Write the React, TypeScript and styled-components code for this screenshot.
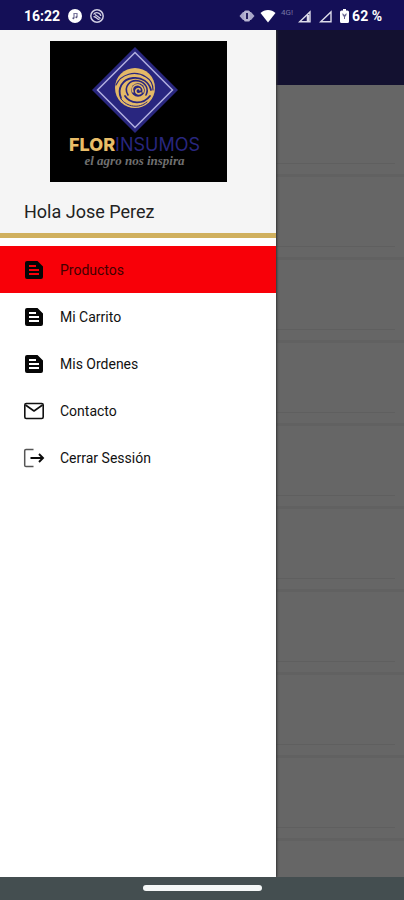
import React from "react";
import styled, { createGlobalStyle } from "styled-components";

const GlobalStyle = createGlobalStyle`
  * { box-sizing: border-box; }
  body { margin: 0; font-family: Roboto, "Liberation Sans", sans-serif; }
`;

const Screen = styled.div`
  display: flex;
  flex-direction: column;
  min-height: 100vh;
  background: #666;
`;

const StatusBar = styled.header`
  display: flex;
  align-items: center;
  justify-content: space-between;
  height: 30px;
  padding: 2px 22px 0 24px;
  background: #140f57;
  color: #fff;
  font-size: 14px;
  font-weight: 700;
`;

const StatusGroup = styled.div<{ $gap: number }>`
  display: flex;
  align-items: center;
  gap: ${(p) => p.$gap}px;
`;

const NetworkLabel = styled.span`
  align-self: flex-start;
  color: #7775a4;
  font-size: 8px;
  font-weight: 400;
  line-height: 10px;
`;

const Signals = styled.span`
  display: flex;
  gap: 8px;
`;

const Battery = styled.span`
  display: flex;
  align-items: center;
  gap: 3px;
  margin-left: 3px;
`;

const Body = styled.div`
  position: relative;
  display: flex;
  flex: 1;
  flex-direction: column;
`;

const AppBar = styled.div`
  height: 55px;
  background: #131130;
`;

const CardList = styled.div`
  display: flex;
  flex: 1;
  flex-direction: column;
  padding-top: 9px;
`;

const Card = styled.div`
  height: 83px;
  padding: 69px 9px 0;
  border-bottom: 3px solid #616161;
`;

const CardRule = styled.div`
  height: 1px;
  background: #5f5f5f;
`;

const Drawer = styled.aside`
  position: absolute;
  top: 0;
  bottom: 0;
  left: 0;
  width: 276px;
  background: #fff;
  box-shadow: 1px 0 2px #333;
  clip-path: inset(0 -4px 0 0);
`;

const Profile = styled.div`
  display: flex;
  flex-direction: column;
  padding-top: 11px;
  background: #f5f5f5;
  border-bottom: 5px solid #d0b05e;
`;

const Logo = styled.div`
  display: flex;
  flex-direction: column;
  align-items: center;
  align-self: center;
  width: 177px;
  height: 141px;
  padding: 5px 7px 0 0;
  background: #000;
`;

const Brand = styled.div`
  color: #28267e;
  font-family: Inter, "Liberation Sans", sans-serif;
  font-size: 18px;
  line-height: 20px;
  margin-top: 1px;
`;

const BrandAccent = styled.b`
  color: #e9bd68;
  font-weight: 800;
`;

const Tagline = styled.div`
  color: #707070;
  font-family: "Liberation Serif", serif;
  font-size: 13px;
  font-style: italic;
  font-weight: 700;
  line-height: 12px;
`;

const Greeting = styled.p`
  margin: 18px 24px 10px;
  color: #222;
  font-size: 18px;
  line-height: 23px;
`;

const Menu = styled.nav`
  display: flex;
  flex-direction: column;
  padding-top: 8px;
`;

const MenuLink = styled.a<{ $active?: boolean }>`
  display: flex;
  align-items: center;
  gap: 14px;
  height: 47px;
  padding: 0 22px;
  background: ${(p) => (p.$active ? "#f80008" : "transparent")};
  color: ${(p) => (p.$active ? "#420000" : "#111")};
  font-size: 14px;
  text-decoration: none;
`;

const HomeBar = styled.footer`
  display: flex;
  justify-content: center;
  height: 23px;
  padding-top: 8px;
  background: #444e50;
`;

const HomeHandle = styled.div`
  width: 119px;
  height: 6px;
  border-radius: 3px;
  background: #f5f7f7;
`;

const DocIcon = () => (
  <svg width="24" height="24" viewBox="0 0 24 24" fill="#060606" aria-hidden="true">
    <path
      fillRule="evenodd"
      d="M15.500 3H5a2 2 0 0 0-2 2v14a2 2 0 0 0 2 2h14a2 2 0 0 0 2-2V8.500zM7 7h7v2H7zm10 10H7v-2h10zm0-4H7v-2h10z"
    />
  </svg>
);

const MailIcon = () => (
  <svg width="24" height="24" viewBox="0 0 24 24" fill="none" stroke="#111" strokeWidth="1.600" strokeLinejoin="round" aria-hidden="true">
    <rect x="2.800" y="4.500" width="18.400" height="15" rx="1.500" />
    <path d="M3.500 6 12 12 20.500 6" />
  </svg>
);

const ExitIcon = () => (
  <svg width="24" height="24" viewBox="0 0 24 24" fill="none" aria-hidden="true">
    <path d="M11.500 3.500H4A1.300 1.300 0 0 0 2.700 4.800v14.400A1.300 1.300 0 0 0 4 20.500h7.500" stroke="#555" strokeWidth="1.500" />
    <path d="M8.500 12H21M17 8 21 12 17 16" stroke="#0b0b0b" strokeWidth="1.900" />
  </svg>
);

const Emblem = () => (
  <svg width="88" height="88" viewBox="0 0 88 88" aria-hidden="true">
    <path d="M44 1 87 44 44 87 1 44z" fill="#29267f" />
    <path d="M44 6.500 81.500 44 44 81.500 6.500 44z" fill="none" stroke="#b1afe0" strokeWidth="1.500" />
    <circle cx="44" cy="42" r="20" fill="#e4b967" />
    <g fill="none" stroke="#29267f" strokeLinecap="round">
      <path d="M25 39C30 28 44 24 55 31c5 3 7 8 7 13" strokeWidth="1.200" />
      <path d="M30 52c-4-9 1-19 12-20 9-1 16 4 18 12" strokeWidth="1.800" />
      <path d="M34 50c5 8 18 9 25 0" strokeWidth="1.800" />
      <path d="M30 53c6 8 18 10 26 3" strokeWidth="1" />
      <path d="M37 49c-5-8 2-16 11-14 7 2 10 8 7 14" strokeWidth="1.600" />
    </g>
    <circle cx="47" cy="44" r="6.800" fill="#29267f" />
    <g fill="none" stroke="#e4b967" strokeLinecap="round">
      <path d="M42 46c-2-4 1-8 6-7 3 1 5 4 4 7" strokeWidth="1.500" />
      <path d="M50 47c-3 2-6 0-5-3 1-2 4-2 4 0" strokeWidth="1.600" />
    </g>
  </svg>
);

const NoteIcon = () => (
  <svg width="14" height="14" viewBox="0 0 14 14" aria-hidden="true">
    <circle cx="7" cy="7" r="7" fill="#fff" />
    <path d="M6 9V4.500h3V8" fill="none" stroke="#77749a" strokeWidth="1.200" />
    <circle cx="5.400" cy="9.200" r="1" fill="#57537e" />
    <circle cx="8.400" cy="8.200" r="1" fill="#57537e" />
  </svg>
);

const SwirlIcon = () => (
  <svg width="14" height="14" viewBox="0 0 14 14" fill="none" stroke="#d0cee2" aria-hidden="true">
    <circle cx="7" cy="7" r="6.200" strokeWidth="1.500" />
    <path d="M3.500 5.500c2-3 7-2 7.300 1.500M3.500 8c2-1.500 3 2.500 6 2.500M5 5.500l5.500 4" strokeWidth="1.300" />
  </svg>
);

const VibrateIcon = () => (
  <svg width="16" height="14" viewBox="0 0 16 14" aria-hidden="true">
    <path d="M4 3h8l3.500 4L12 11H4L.5 7z" fill="#a9a7c9" />
    <rect x="5" y="1.500" width="6" height="11" rx="1.500" fill="#b7b5d2" />
    <rect x="7" y="4" width="2" height="6" fill="#262160" />
  </svg>
);

const WifiIcon = () => (
  <svg width="16" height="14" viewBox="0 0 16 14" aria-hidden="true">
    <path d="M.5 4C4.500 0 11.500 0 15.500 4L8 13.500z" fill="#fff" />
  </svg>
);

const SignalIcon = ({ strong = false }: { strong?: boolean }) => (
  <svg width="13" height="13" viewBox="0 0 13 13" fill="none" stroke="#dcdbe9" strokeWidth="1.400" aria-hidden="true">
    <path d="M1.700 11.800 12 2v9.800z" />
    {strong && <path d="M10 5v6.500" strokeWidth="2.500" />}
  </svg>
);

const BatteryIcon = () => (
  <svg width="9" height="14" viewBox="0 0 9 14" aria-hidden="true">
    <path d="M3 0h3v1.500h1.500A1.500 1.500 0 0 1 9 3v9.500A1.500 1.500 0 0 1 7.500 14h-6A1.500 1.500 0 0 1 0 12.500V3a1.500 1.500 0 0 1 1.500-1.500H3z" fill="#fff" />
    <path d="M2.500 4v2L4 8v2h1V8l1.500-2V4L4.500 6z" fill="#6a6790" />
  </svg>
);

const menuItems = [
  { label: "Productos", href: "#productos", Icon: DocIcon },
  { label: "Mi Carrito", href: "#carrito", Icon: DocIcon },
  { label: "Mis Ordenes", href: "#ordenes", Icon: DocIcon },
  { label: "Contacto", href: "#contacto", Icon: MailIcon },
  { label: "Cerrar Sessión", href: "#salir", Icon: ExitIcon },
];

const cards = Array.from({ length: 9 }, (_, i) => i);

export default function App() {
  return (
    <Screen>
      <GlobalStyle />
      <StatusBar>
        <StatusGroup $gap={8}>
          <span>16:22</span>
          <NoteIcon />
          <SwirlIcon />
        </StatusGroup>
        <StatusGroup $gap={5}>
          <VibrateIcon />
          <WifiIcon />
          <NetworkLabel>4G!</NetworkLabel>
          <Signals>
            <SignalIcon strong />
            <SignalIcon />
          </Signals>
          <Battery>
            <BatteryIcon />
            62 %
          </Battery>
        </StatusGroup>
      </StatusBar>
      <Body>
        <AppBar />
        <CardList>
          {cards.map((id) => (
            <Card key={id}>
              <CardRule />
            </Card>
          ))}
        </CardList>
        <Drawer>
          <Profile>
            <Logo>
              <Emblem />
              <Brand>
                <BrandAccent>FLOR</BrandAccent>INSUMOS
              </Brand>
              <Tagline>el agro nos inspira</Tagline>
            </Logo>
            <Greeting>Hola Jose Perez</Greeting>
          </Profile>
          <Menu>
            {menuItems.map(({ label, href, Icon }, index) => (
              <MenuLink key={label} href={href} $active={index === 0}>
                <Icon />
                {label}
              </MenuLink>
            ))}
          </Menu>
        </Drawer>
      </Body>
      <HomeBar>
        <HomeHandle />
      </HomeBar>
    </Screen>
  );
}
